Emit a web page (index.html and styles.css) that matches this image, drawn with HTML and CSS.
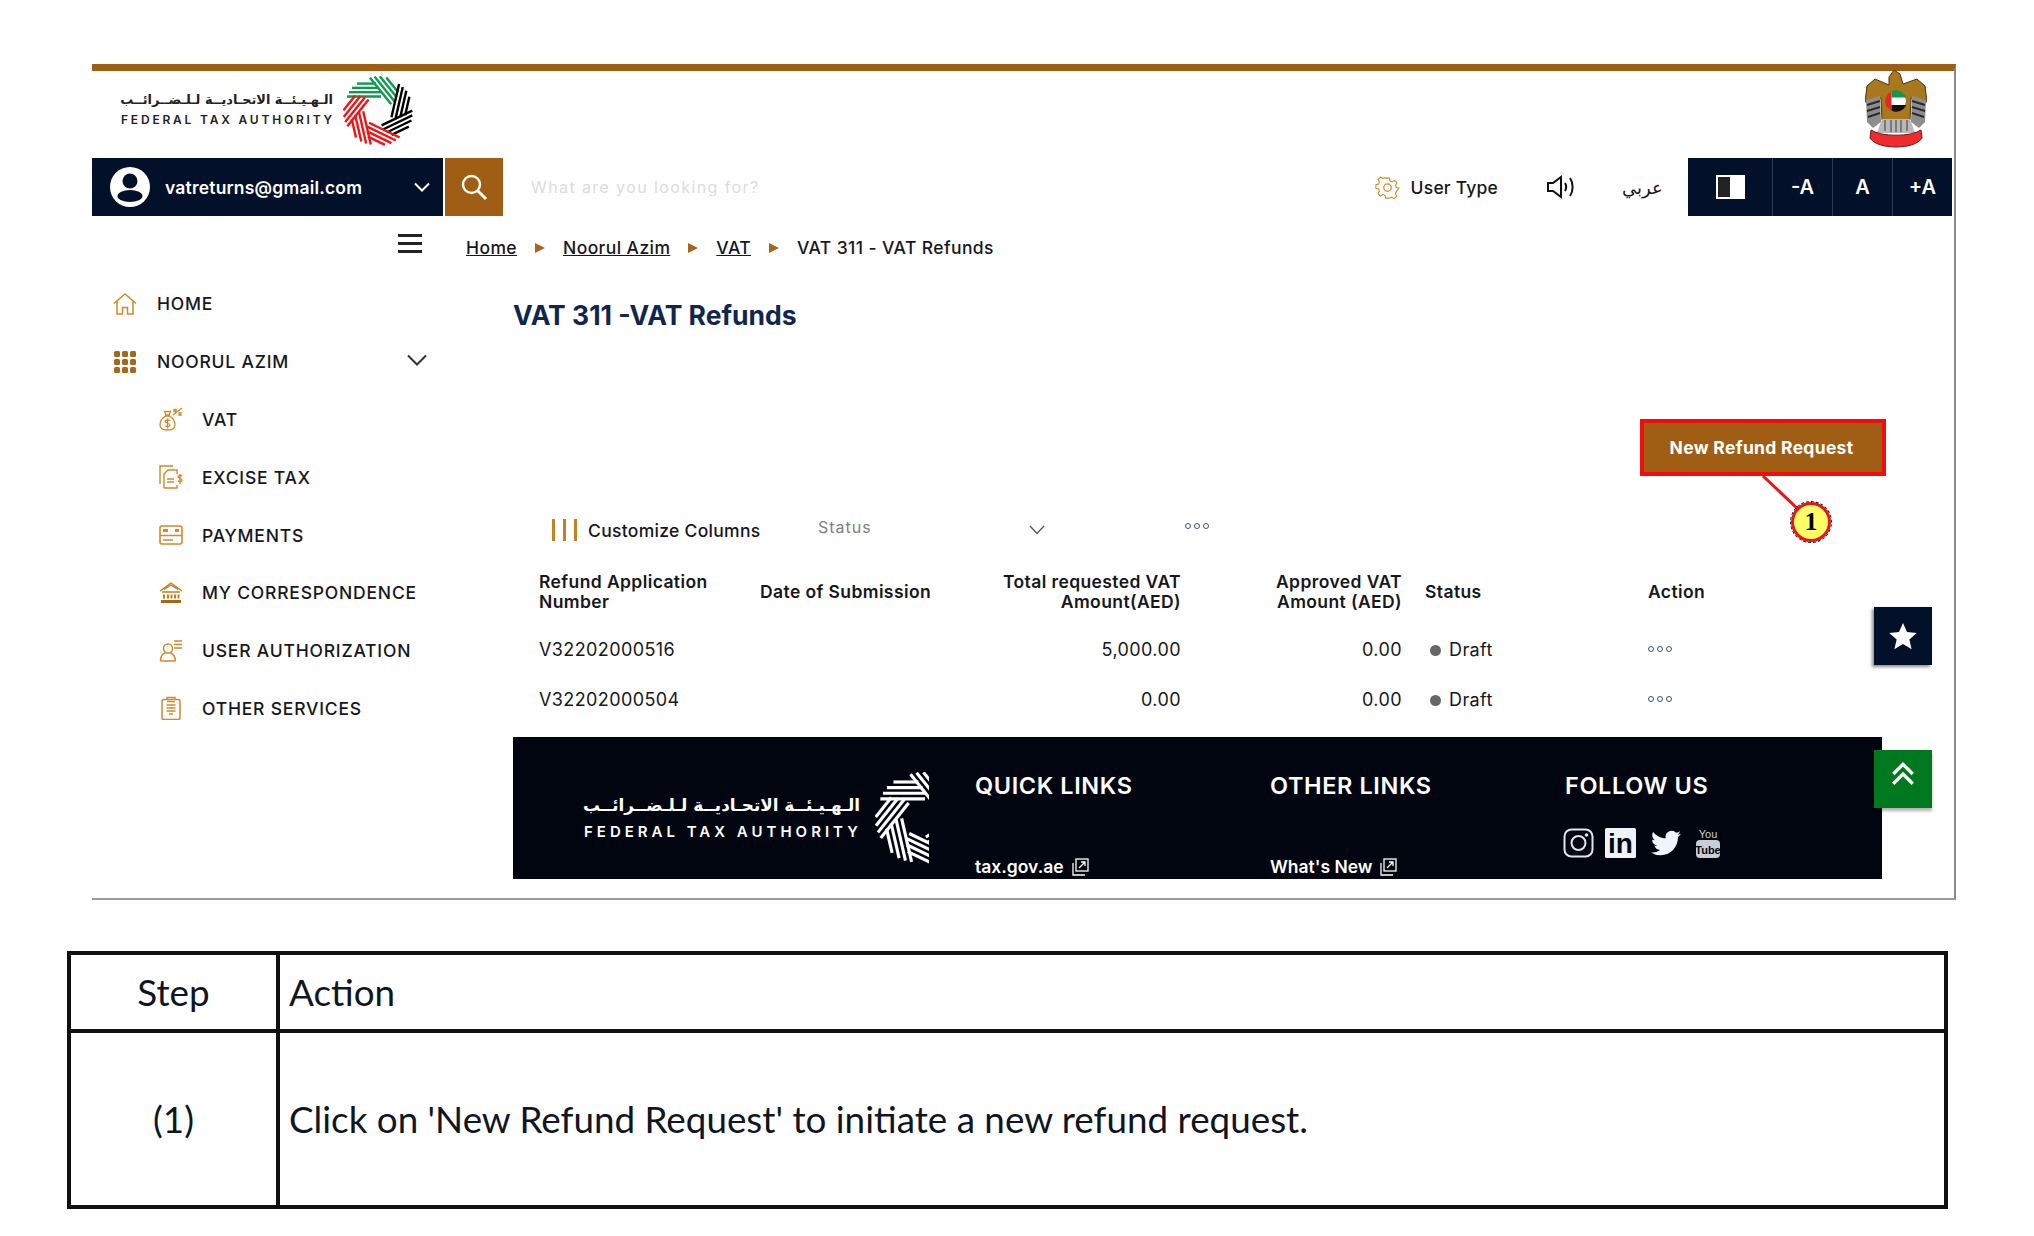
FILE: index.html
```html
<!DOCTYPE html>
<html lang="en">
<head>
    <meta charset="UTF-8">
    <title>VAT 311 - VAT Refunds</title>
    <link rel="stylesheet" href="styles.css">
</head>
<body>
    <!-- shared shapes for the authority ring -->
    <svg class="defs" width="0" height="0">
        <defs>
            <g id="band" fill="none" stroke-width="2.4">
                <path d="M-31 -14.5H3"/>
                <path d="M-29 -18.8H3"/>
                <path d="M-26 -23.1H1"/>
                <path d="M-21 -27.4H-2"/>
            </g>
        </defs>
    </svg>

    <div class="frame">
        <header class="head">
            <div class="logo">
                <div class="logo-text">
                    <div class="logo-ar" lang="ar" dir="rtl">الـهـيـئــة الاتحـاديــة لـلـضــرائــب</div>
                    <div class="logo-en">FEDERAL TAX AUTHORITY</div>
                </div>
                <svg class="ring" viewBox="-35 -35 70 70">
                    <use href="#band" stroke="#0a9b4b"/>
                    <use href="#band" stroke="#0a9b4b" transform="rotate(51.4)"/>
                    <use href="#band" stroke="#000" transform="rotate(102.9)"/>
                    <use href="#band" stroke="#000" transform="rotate(154.3)"/>
                    <use href="#band" stroke="#f01414" transform="rotate(205.7)"/>
                    <use href="#band" stroke="#f01414" transform="rotate(257.1)"/>
                    <use href="#band" stroke="#f01414" transform="rotate(308.6)"/>
                </svg>
            </div>
            <svg class="emblem" viewBox="0 0 62 80">
                <path d="M24 15 L24 7 L29 0 L35 4 L38 14 L52 9 L60 16 L62 32 L46 28 L45 50 L17 50 L16 28 L0 32 L2 16 L10 9Z" fill="#a9771c" stroke="#4a3510" stroke-width="1"/>
                <path d="M1 30 L15 26 L16 52 L8 58 L2 52Z" fill="#8d8d8d"/>
                <path d="M61 30 L47 26 L46 52 L54 58 L60 52Z" fill="#8d8d8d"/>
                <path d="M2 35 L15 31 M2 41 L15 37 M3 47 L15 43 M60 35 L47 31 M60 41 L47 37 M59 47 L47 43" stroke="#2a2a2a" stroke-width="2" fill="none"/>
                <path d="M17 49 H45 L50 63 H12Z" fill="#b9b9b9"/>
                <path d="M20 50V61 M26 50V62 M31 50V62 M36 50V62 M42 50V61" stroke="#666" stroke-width="1.5"/>
                <path d="M6 60 C16 67 46 67 56 60 L57 68 C50 80 12 80 5 68Z" fill="#ef2b2d" stroke="#6d1a12" stroke-width="1"/>
                <circle cx="31" cy="31" r="10.5" fill="#fff" stroke="#8a6a22"/>
                <path d="M26.500 21.500 A10.500 10.500 0 0 0 26.500 40.500Z" fill="#e8262a"/>
                <path d="M26.500 21.500 A10.500 10.500 0 0 1 41 27.500H26.500Z" fill="#0a9b4b"/>
                <path d="M26.500 35H41 A10.500 10.500 0 0 1 26.500 40.500Z" fill="#111"/>
            </svg>
        </header>

        <div class="bar">
            <div class="user-box">
                <svg class="user-pic" viewBox="0 0 40 40">
                    <circle cx="20" cy="20" r="20" fill="#fff"/>
                    <circle cx="20" cy="14" r="7.5" fill="#031029"/>
                    <ellipse cx="20" cy="29" rx="12.5" ry="6" fill="#031029"/>
                </svg>
                <span class="user-mail">vatreturns@gmail.com</span>
                <svg class="user-arrow" viewBox="0 0 16 10"><path d="M1 1.5 8 8.5 15 1.5" fill="none" stroke="#fff" stroke-width="2"/></svg>
            </div>
            <div class="search-btn">
                <svg viewBox="0 0 28 28" width="28" height="28"><circle cx="11.5" cy="11.5" r="8.5" fill="none" stroke="#fff" stroke-width="2.4"/><path d="M18 18 26 26" stroke="#fff" stroke-width="3"/></svg>
            </div>
            <div class="search-text">What are you looking for?</div>
            <div class="tools">
                <svg class="gear" viewBox="0 0 24 24" fill="none" stroke="#d08a2c" stroke-width="1.2"><path d="M10 1.5h4l.7 3.2 2.3 1 2.8-1.700 2.700 2.900-1.700 2.700 1 2.400 3 .7v0l-3 3.900-.1 0-1 2.300 1.600 2.800-2.800 2.700-2.800-1.600-2.200 .9-.7 .1h-4l-.7-3-2.300-1-2.800 1.700-2.700-2.800 1.700-2.800-1-2.300-3-.7v-4l3-.7 1-2.300-1.700-2.800 2.800-2.800 2.800 1.700 2.200-1z" transform="scale(.86) translate(2 2)"/><circle cx="12" cy="12" r="3.600"/></svg>
                <span class="user-type">User Type</span>
                <svg class="speaker" viewBox="0 0 30 24" fill="none" stroke="#111" stroke-width="2"><path d="M2 8h5l8-6v20l-8-6H2z"/><path d="M19 8c1.500 2.500 1.500 5.500 0 8M24 3c3.500 5 3.500 13 0 18"/></svg>
                <span class="arabic" lang="ar">عربي</span>
            </div>
            <div class="a11y">
                <div class="a11y-btn contrast"><span class="contrast-box"></span></div>
                <div class="a11y-btn size">-A</div>
                <div class="a11y-btn size">A</div>
                <div class="a11y-btn size">+A</div>
            </div>
        </div>

        <div class="crumb-row">
            <div class="burger-cell"><div class="burger"><i></i><i></i><i></i></div></div>
            <nav class="crumbs">
                <a>Home</a><span class="tri"></span>
                <a>Noorul Azim</a><span class="tri"></span>
                <a>VAT</a><span class="tri"></span>
                <span>VAT 311 - VAT Refunds</span>
            </nav>
        </div>

        <div class="content">
            <aside class="side">
                <div class="nav-item">
                    <svg class="nav-icon" viewBox="0 0 24 24" fill="none" stroke="#d08a2c" stroke-width="1.500"><path d="M1 11.500 12 2l11 9.500M4 9.500V22h5.500v-6.500h5V22H20V9.500"/></svg>
                    HOME
                </div>
                <div class="nav-item">
                    <svg class="nav-icon" viewBox="0 0 24 24" fill="#a8661a"><rect x="1" y="1" width="6" height="6" rx="1.500"/><rect x="9" y="1" width="6" height="6" rx="1.500"/><rect x="17" y="1" width="6" height="6" rx="1.500"/><rect x="1" y="9" width="6" height="6" rx="1.500"/><rect x="9" y="9" width="6" height="6" rx="1.500"/><rect x="17" y="9" width="6" height="6" rx="1.500"/><rect x="1" y="17" width="6" height="6" rx="1.500"/><rect x="9" y="17" width="6" height="6" rx="1.500"/><rect x="17" y="17" width="6" height="6" rx="1.500"/></svg>
                    NOORUL AZIM
                    <svg class="nav-arrow" viewBox="0 0 20 12"><path d="M1 1.500 10 10.500 19 1.500" fill="none" stroke="#333" stroke-width="2"/></svg>
                </div>
                <div class="nav-item sub">
                    <svg class="nav-icon" viewBox="0 0 24 24" fill="none" stroke="#d08a2c" stroke-width="1.300"><path d="M6 8h5M7 8 5.500 4.500h6L10 8M6.500 9C3 11 1 14 1 18c0 3 3 5 7.500 5s7.500-2 7.500-5c0-4-2-7-5.500-9z"/><path d="M11 14c-1-1.500-5-1.500-5 .5s5 1.500 5 3.500-4 2-5 .5M8.500 11.500v10"/><path d="M14 8 23 1M15 2.500h2v2h-2zM20 6h2v2h-2z"/></svg>
                    VAT
                </div>
                <div class="nav-item sub">
                    <svg class="nav-icon" viewBox="0 0 24 24" fill="none" stroke="#d08a2c" stroke-width="1.400"><path d="M14 1H1v18"/><path d="M5 23V9l4-4h9v4M5 23h13v-3"/><path d="M8 14h7M8 17h7" /><path d="M23 11c-1-1-4-1-4 .8s4 1.400 4 3.200-3 2-4 .8M21 9v10"/></svg>
                    EXCISE TAX
                </div>
                <div class="nav-item sub">
                    <svg class="nav-icon" viewBox="0 0 24 24" fill="none" stroke="#d08a2c" stroke-width="1.600"><rect x="1" y="3" width="22" height="18" rx="2"/><path d="M1 12.500h22M4 17h10" /><path d="M4 7.500h5M16 7.500h4" stroke-width="3"/></svg>
                    PAYMENTS
                </div>
                <div class="nav-item sub">
                    <svg class="nav-icon" viewBox="0 0 24 24" fill="none" stroke="#c67f22" stroke-width="1.400"><path d="M1 10 12 2l11 8M5 8.500 12 4l7 4.500M3 11h18"/><path d="M5 13.500v4M9 13.500v4M12.500 13.500v4M16 13.500v4M19.500 13.500v4" stroke-width="2"/><path d="M2 20.500h20" stroke="#a8661a" stroke-width="3"/></svg>
                    MY CORRESPONDENCE
                </div>
                <div class="nav-item sub">
                    <svg class="nav-icon" viewBox="0 0 24 24" fill="none" stroke="#d08a2c" stroke-width="1.500"><circle cx="9" cy="9.500" r="4.500"/><path d="M1.500 22c0-5 2.500-7.500 5-8M16.500 22c0-3-1-6-5-8M1.500 22h15"/><path d="M15 2h8M15 5.500h8M15 9h8"/></svg>
                    USER AUTHORIZATION
                </div>
                <div class="nav-item sub">
                    <svg class="nav-icon" viewBox="0 0 24 24" fill="none" stroke="#d08a2c" stroke-width="1.500"><rect x="3" y="3.500" width="18" height="20" rx="1.500"/><path d="M8 3.500V1.500h8v2M8 5.500h8M7.500 9h9M7.500 12h9M7.500 15h9M10 18h4"/></svg>
                    OTHER SERVICES
                </div>
            </aside>

            <main class="main">
                <h1 class="title">VAT 311 -VAT Refunds</h1>
                <div class="new-row">
                    <div class="new-wrap">
                        <button class="new-btn">New Refund Request</button>
                        <svg class="call-line" width="60" height="40"><path d="M2 0 38 34" stroke="#e4161c" stroke-width="3"/></svg>
                        <div class="badge">1</div>
                    </div>
                </div>
                <div class="toolbar">
                    <div class="col-bars"><i></i><i></i><i></i></div>
                    <span class="custom">Customize Columns</span>
                    <span class="status-filter">Status</span>
                    <svg class="filter-arrow" viewBox="0 0 16 10"><path d="M1 1 8 8.500 15 1" fill="none" stroke="#555" stroke-width="1.300"/></svg>
                    <div class="dots"><i></i><i></i><i></i></div>
                </div>
                <table class="grid">
                    <tr>
                        <th class="c1">Refund Application<br>Number</th>
                        <th class="c2">Date of Submission</th>
                        <th class="c3 num">Total requested VAT<br>Amount(AED)</th>
                        <th class="c4 num">Approved VAT<br>Amount (AED)</th>
                        <th class="c5">Status</th>
                        <th class="c6">Action</th>
                    </tr>
                    <tr>
                        <td class="c1">V32202000516</td>
                        <td class="c2"></td>
                        <td class="c3 num">5,000.00</td>
                        <td class="c4 num">0.00</td>
                        <td class="c5"><span class="bullet"></span>Draft</td>
                        <td class="c6"><div class="dots"><i></i><i></i><i></i></div></td>
                    </tr>
                    <tr>
                        <td class="c1">V32202000504</td>
                        <td class="c2"></td>
                        <td class="c3 num">0.00</td>
                        <td class="c4 num">0.00</td>
                        <td class="c5"><span class="bullet"></span>Draft</td>
                        <td class="c6"><div class="dots"><i></i><i></i><i></i></div></td>
                    </tr>
                </table>

                <footer class="foot">
                    <div class="foot-logo">
                        <div class="foot-text">
                            <div class="foot-ar" lang="ar" dir="rtl">الـهـيـئــة الاتحـاديــة لـلـضــرائــب</div>
                            <div class="foot-en">FEDERAL TAX AUTHORITY</div>
                        </div>
                        <svg class="foot-ring" viewBox="-35 -35 41 70" stroke="#fff">
                            <use href="#band"/>
                            <use href="#band" transform="rotate(51.4)"/>
                            <use href="#band" transform="rotate(154.3)"/>
                            <use href="#band" transform="rotate(205.7)"/>
                            <use href="#band" transform="rotate(257.1)"/>
                            <use href="#band" transform="rotate(308.6)"/>
                        </svg>
                    </div>
                    <div class="foot-col links-a">
                        <h4>QUICK LINKS</h4>
                        <a>tax.gov.ae
                            <svg class="ext" viewBox="0 0 18 18" fill="none" stroke="#fff" stroke-width="1.300"><rect x="5" y="1" width="12" height="12"/><path d="M8 10 14 4M10 4h4v4M2 5v12h12"/></svg>
                        </a>
                    </div>
                    <div class="foot-col links-b">
                        <h4>OTHER LINKS</h4>
                        <a>What's New
                            <svg class="ext" viewBox="0 0 18 18" fill="none" stroke="#fff" stroke-width="1.300"><rect x="5" y="1" width="12" height="12"/><path d="M8 10 14 4M10 4h4v4M2 5v12h12"/></svg>
                        </a>
                    </div>
                    <div class="foot-col links-c">
                        <h4>FOLLOW US</h4>
                        <div class="social">
                            <svg class="s-ig" viewBox="0 0 31 30" fill="none" stroke="#dfe6ee" stroke-width="2"><rect x="1.500" y="1.500" width="28" height="27" rx="7"/><circle cx="15.500" cy="15" r="7"/><circle cx="23.500" cy="7" r=".8"/></svg>
                            <svg class="s-in" viewBox="0 0 31 30"><rect width="31" height="30" rx="1.500" fill="#eef3f8"/><text x="15.500" y="25" text-anchor="middle" class="in-text">in</text></svg>
                            <svg class="s-tw" viewBox="0 0 24 24"><path fill="#eef5fb" d="M23.953 4.570a10 10 0 01-2.825.775 4.958 4.958 0 002.163-2.723c-.951.555-2.005.959-3.127 1.184a4.920 4.920 0 00-8.384 4.482C7.690 8.095 4.067 6.130 1.640 3.162a4.822 4.822 0 00-.666 2.475c0 1.710.870 3.213 2.188 4.096a4.904 4.904 0 01-2.228-.616v.060a4.923 4.923 0 003.946 4.827 4.996 4.996 0 01-2.212.085 4.936 4.936 0 004.604 3.417 9.867 9.867 0 01-6.102 2.105c-.390 0-.779-.023-1.170-.067a13.995 13.995 0 007.557 2.209c9.053 0 13.998-7.496 13.998-13.985 0-.210 0-.420-.015-.630A9.935 9.935 0 0024 4.590z"/></svg>
                            <svg class="s-yt" viewBox="0 0 24 30"><text x="12" y="10" text-anchor="middle" class="yt-you">You</text><rect x="0" y="12" width="24" height="18" rx="4" fill="#c9ced6"/><text x="12" y="26" text-anchor="middle" class="yt-tube">Tube</text></svg>
                        </div>
                    </div>
                </footer>
            </main>
        </div>

        <div class="float-star">
            <svg viewBox="0 0 24 24" width="30" height="30"><path fill="#fff" d="M12 1.500l3.200 7.300 7.800.7-5.900 5.200 1.800 7.800L12 18.400l-6.900 4.100 1.800-7.800L1 9.500l7.800-.7z"/></svg>
        </div>
        <div class="float-up">
            <svg viewBox="0 0 24 24" width="26" height="26" fill="none" stroke="#fff" stroke-width="3"><path d="M3 12 12 3l9 9M3 21l9-9 9 9"/></svg>
        </div>
    </div>

    <table class="steps">
        <tr class="steps-head">
            <td class="step-no">Step</td>
            <td>Action</td>
        </tr>
        <tr class="steps-row">
            <td class="step-no">(1)</td>
            <td>Click on 'New Refund Request' to initiate a new refund request.</td>
        </tr>
    </table>
</body>
</html>
```

FILE: styles.css
```css
* {
    box-sizing: border-box;
}
body {
    margin: 0;
    padding-top: 64px;
    background: #fff;
    color: #15171c;
    font-family: Inter, "Open Sans", sans-serif;
}
.defs {
    display: block;
    height: 0;
}
.frame {
    position: relative;
    margin-left: 92px;
    width: 1864px;
    height: 836px;
    border-top: 7px solid #a05e14;
    border-right: 2px solid #8a8a8a;
    border-bottom: 2px solid #9a9a9a;
}

/* header */
.head {
    display: flex;
    justify-content: space-between;
    height: 87px;
    padding: 0 27px 0 29px;
}
.logo {
    display: flex;
    align-items: center;
    gap: 10px;
    height: 78px;
}
.logo-text {
    width: 212px;
}
.logo-ar {
    font-family: "DejaVu Sans", sans-serif;
    font-size: 12.900px;
    line-height: 20px;
    font-weight: 700;
    white-space: nowrap;
    color: #222;
}
.logo-en {
    font-size: 12px;
    font-weight: 600;
    letter-spacing: 2.800px;
    line-height: 20px;
    white-space: nowrap;
    color: #222;
}
.ring {
    width: 70px;
    height: 70px;
    margin-top: 1px;
}
.emblem {
    width: 62px;
    height: 80px;
    margin-top: -1px;
}

/* bar under header */
.bar {
    display: flex;
    align-items: center;
    height: 58px;
}
.user-box {
    display: flex;
    align-items: center;
    width: 351px;
    height: 58px;
    padding-left: 18px;
    background: #031029;
    color: #fff;
}
.user-pic {
    width: 40px;
    height: 40px;
}
.user-mail {
    margin-left: 15px;
    font-size: 17.500px;
    font-weight: 600;
    letter-spacing: .2px;
}
.user-arrow {
    width: 16px;
    height: 10px;
    margin-left: auto;
    margin-right: 13px;
}
.search-btn {
    display: flex;
    align-items: center;
    justify-content: center;
    width: 58px;
    height: 58px;
    margin-left: 2px;
    background: #a05e14;
}
.search-text {
    margin-left: 28px;
    font-size: 16px;
    letter-spacing: 1.400px;
    color: #dcdcdc;
}
.tools {
    display: flex;
    align-items: center;
    margin-left: auto;
}
.gear {
    width: 25px;
    height: 25px;
}
.user-type {
    margin-left: 11px;
    font-size: 17.500px;
    font-weight: 500;
    letter-spacing: .2px;
}
.speaker {
    width: 30px;
    height: 24px;
    margin-left: 48px;
}
.arabic {
    width: 40px;
    margin: 0 26px 0 46px;
    font-family: "DejaVu Sans", sans-serif;
    font-size: 18px;
}
.a11y {
    display: flex;
    height: 58px;
    margin-right: 2px;
}
.a11y-btn {
    display: flex;
    align-items: center;
    justify-content: center;
    background: #031029;
    color: #fff;
    font-size: 20px;
    font-weight: 600;
    width: 60px;
    border-left: 1px solid #2c3a55;
}
.contrast {
    width: 84px;
    border-left: 0;
}
.contrast-box {
    display: block;
    width: 29px;
    height: 24px;
    border: 2px solid #fff;
    background: linear-gradient(to right, #222 50%, #fff 50%);
}

/* breadcrumb */
.crumb-row {
    display: flex;
    align-items: center;
    height: 58px;
}
.burger-cell {
    display: flex;
    justify-content: flex-end;
    width: 374px;
    padding-right: 44px;
}
.burger {
    display: flex;
    flex-direction: column;
    gap: 5px;
    width: 24px;
    margin-top: -3px;
}
.burger i {
    display: block;
    height: 3px;
    background: #222;
}
.crumbs {
    display: flex;
    align-items: center;
    padding-top: 5px;
    font-size: 17.500px;
    font-weight: 500;
    letter-spacing: .4px;
}
.crumbs a {
    text-decoration: underline;
}
.tri {
    width: 0;
    height: 0;
    margin: 0 18px;
    border-left: 10px solid #a8661a;
    border-top: 5px solid transparent;
    border-bottom: 5px solid transparent;
}

/* sidebar + main */
.content {
    display: flex;
}
.side {
    width: 421px;
    flex: none;
    padding-top: 1px;
}
.nav-item {
    display: flex;
    align-items: center;
    height: 57.800px;
    padding-left: 21px;
    padding-right: 86px;
    font-size: 17.500px;
    font-weight: 500;
    letter-spacing: .8px;
}
.nav-icon {
    width: 24px;
    height: 24px;
    margin-right: 20px;
    flex: none;
}
.nav-item.sub {
    padding-left: 67px;
}
.nav-item.sub .nav-icon {
    margin-right: 19px;
}
.nav-arrow {
    width: 20px;
    height: 12px;
    margin-left: auto;
    margin-top: -3px;
}
.main {
    flex: 1;
    padding-top: 25px;
}
.title {
    margin: 0;
    font-size: 26.500px;
    line-height: 32px;
    font-weight: 700;
    color: #10264d;
}
.new-row {
    display: flex;
    justify-content: flex-end;
    margin-top: 88px;
    margin-right: 68px;
}
.new-wrap {
    position: relative;
    width: 246px;
    height: 57px;
}
.new-btn {
    display: block;
    width: 100%;
    height: 100%;
    padding: 0 0 0 0;
    border: 4px solid #f20d0d;
    background: #a05e14;
    color: #fff;
    font-family: inherit;
    font-size: 17.500px;
    font-weight: 700;
    letter-spacing: .3px;
    text-indent: -3px;
}
.call-line {
    position: absolute;
    left: 121px;
    top: 57px;
}
.badge {
    position: absolute;
    left: 151px;
    top: 83px;
    width: 40px;
    height: 40px;
    border: 3px solid #e4161c;
    outline: 1px dashed #111;
    border-radius: 50%;
    background: #ffff66;
    color: #000;
    font-family: "Liberation Serif", serif;
    font-size: 26px;
    font-weight: 700;
    line-height: 34px;
    text-align: center;
}

/* toolbar above the table */
.toolbar {
    display: flex;
    align-items: center;
    height: 40px;
    margin-top: 34px;
    padding-left: 39px;
}
.col-bars {
    display: flex;
    gap: 8px;
}
.col-bars i {
    display: block;
    width: 3px;
    height: 22px;
    background: #c67f22;
}
.custom {
    margin-left: 11px;
    font-size: 17.500px;
    font-weight: 500;
    letter-spacing: .3px;
    width: 230px;
}
.status-filter {
    font-size: 16px;
    color: #808080;
    letter-spacing: 1px;
    margin-top: -7px;
    width: 211px;
}
.filter-arrow {
    width: 16px;
    height: 10px;
}
.toolbar .dots {
    margin-left: 140px;
    margin-top: -8px;
}
.dots {
    display: flex;
    gap: 3px;
}
.dots i {
    display: block;
    width: 6px;
    height: 6px;
    border: 1.500px solid #34527f;
    border-radius: 50%;
}

/* refund table */
.grid {
    width: 1369px;
    margin-top: 22px;
    border-collapse: collapse;
    table-layout: fixed;
    font-size: 17.500px;
    letter-spacing: .4px;
}
.grid th {
    height: 40px;
    padding: 0;
    font-weight: 600;
    line-height: 20px;
    text-align: left;
}
.grid td {
    height: 50px;
    padding: 0;
    font-size: 18px;
    font-weight: 400;
}
.grid tr:nth-child(2) td {
    height: 58px;
    padding-top: 16px;
}
.grid tr:nth-child(3) td {
    height: 50px;
    padding-top: 8px;
}
.grid .num {
    text-align: right;
}
.c1 {
    width: 247px;
    padding-left: 26px !important;
}
.c2 {
    width: 240px;
}
.c3 {
    width: 181px;
}
.c4 {
    width: 221px;
}
.c5 {
    width: 246px;
    padding-left: 23px !important;
}
.bullet {
    display: inline-block;
    width: 11px;
    height: 11px;
    margin: 0 8px 0 5px;
    border-radius: 50%;
    background: #666;
}

/* footer */
.foot {
    display: flex;
    width: 1369px;
    height: 142px;
    margin-top: 17px;
    background: #01050f;
    color: #fff;
}
.foot-logo {
    display: flex;
    align-items: center;
    gap: 15px;
    width: 462px;
    padding-left: 71px;
    flex: none;
}
.foot-text {
    width: 276px;
    margin-top: 19px;
}
.foot-ar {
    font-family: "DejaVu Sans", sans-serif;
    font-size: 16.800px;
    font-weight: 700;
    line-height: 29px;
    white-space: nowrap;
}
.foot-en {
    font-size: 15px;
    font-weight: 600;
    letter-spacing: 4px;
    line-height: 24px;
    white-space: nowrap;
}
.foot-ring {
    width: 54px;
    height: 92px;
    margin-top: 20px;
    flex: none;
}
.foot-col {
    position: relative;
    width: 295px;
    flex: none;
}
.foot-col h4 {
    margin: 37px 0 0;
    font-size: 23.500px;
    line-height: 24px;
    font-weight: 600;
    letter-spacing: .6px;
}
.foot-col a {
    display: flex;
    align-items: center;
    gap: 7px;
    margin-top: 58px;
    font-size: 17.500px;
    font-weight: 600;
}
.ext {
    width: 18px;
    height: 18px;
}
.social {
    display: flex;
    align-items: center;
    gap: 11px;
    margin-top: 30px;
    margin-left: -2px;
}
.s-ig, .s-in {
    width: 31px;
    height: 30px;
}
.s-tw {
    width: 32px;
    height: 30px;
    margin-left: 3px;
}
.s-yt {
    width: 24px;
    height: 30px;
    margin-left: 3px;
}
.in-text {
    font-family: "Liberation Sans", sans-serif;
    font-size: 28px;
    font-weight: 700;
    fill: #01050f;
}
.yt-you {
    font-family: "Liberation Sans", sans-serif;
    font-size: 11px;
    fill: #c9ced6;
}
.yt-tube {
    font-family: "Liberation Sans", sans-serif;
    font-size: 11px;
    font-weight: 700;
    fill: #01050f;
}

/* floating buttons */
.float-star, .float-up {
    position: absolute;
    right: 22px;
    display: flex;
    align-items: center;
    justify-content: center;
    width: 58px;
    height: 58px;
}
.float-star {
    top: 536px;
    background: #031029;
    box-shadow: -2px 2px 3px rgba(0, 0, 0, .45);
}
.float-up {
    top: 679px;
    background: #00781e;
    padding-bottom: 10px;
    box-shadow: 0 3px 3px rgba(0, 0, 0, .3);
}

/* step table */
.steps {
    width: 1881px;
    margin: 51px 0 0 67px;
    border-collapse: collapse;
    font-family: Lato, "Open Sans", sans-serif;
    font-size: 36.800px;
    color: #10151f;
}
.steps td {
    padding: 0 0 0 9px;
    border: 4px solid #111;
}
.steps .step-no {
    width: 209px;
    padding: 0;
    text-align: center;
}
.steps-head {
    height: 78px;
}
.steps-row {
    height: 176px;
}
```
